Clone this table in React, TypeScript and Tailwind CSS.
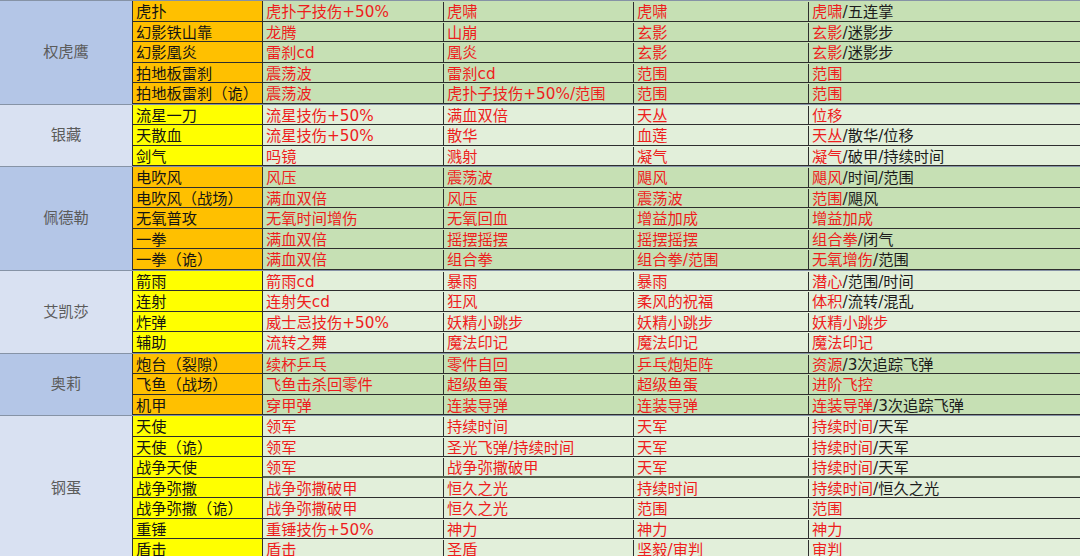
import React from "react";

type Row = [string, string, string, string, string];
type Group = { name: string; dark: boolean; rows: Row[]; thickBefore?: number };

const groups: Group[] = [
  {
    name: "权虎鹰",
    dark: true,
    rows: [
      ["虎扑", "虎扑子技伤+50%", "虎啸", "虎啸", "虎啸|/五连掌"],
      ["幻影铁山靠", "龙腾", "山崩", "玄影", "玄影|/迷影步"],
      ["幻影凰炎", "雷刹cd", "凰炎", "玄影", "玄影|/迷影步"],
      ["拍地板雷刹", "震荡波", "雷刹cd", "范围", "范围"],
      ["拍地板雷刹（诡）", "震荡波", "虎扑子技伤+50%/范围", "范围", "范围"],
    ],
  },
  {
    name: "银藏",
    dark: false,
    rows: [
      ["流星一刀", "流星技伤+50%", "满血双倍", "天丛", "位移"],
      ["天散血", "流星技伤+50%", "散华", "血莲", "天丛|/散华/位移"],
      ["剑气", "吗镜", "溅射", "凝气", "凝气|/破甲/持续时间"],
    ],
  },
  {
    name: "佩德勒",
    dark: true,
    rows: [
      ["电吹风", "风压", "震荡波", "飓风", "飓风|/时间/范围"],
      ["电吹风（战场）", "满血双倍", "风压", "震荡波", "范围|/飓风"],
      ["无氧普攻", "无氧时间增伤", "无氧回血", "增益加成", "增益加成"],
      ["一拳", "满血双倍", "摇摆摇摆", "摇摆摇摆", "组合拳|/闭气"],
      ["一拳（诡）", "满血双倍", "组合拳", "组合拳/范围", "无氧增伤|/范围"],
    ],
  },
  {
    name: "艾凯莎",
    dark: false,
    rows: [
      ["箭雨", "箭雨cd", "暴雨", "暴雨", "潜心|/范围/时间"],
      ["连射", "连射矢cd", "狂风", "柔风的祝福", "体积|/流转/混乱"],
      ["炸弹", "威士忌技伤+50%", "妖精小跳步", "妖精小跳步", "妖精小跳步"],
      ["辅助", "流转之舞", "魔法印记", "魔法印记", "魔法印记"],
    ],
  },
  {
    name: "奥莉",
    dark: true,
    rows: [
      ["炮台（裂隙）", "续杯乒乓", "零件自回", "乒乓炮矩阵", "资源|/3次追踪飞弹"],
      ["飞鱼（战场）", "飞鱼击杀回零件", "超级鱼蛋", "超级鱼蛋", "进阶飞控"],
      ["机甲", "穿甲弹", "连装导弹", "连装导弹", "连装导弹|/3次追踪飞弹"],
    ],
  },
  {
    name: "钢蛋",
    dark: false,
    thickBefore: 3,
    rows: [
      ["天使", "领军", "持续时间", "天军", "持续时间|/天军"],
      ["天使（诡）", "领军", "圣光飞弹/持续时间", "天军", "持续时间|/天军"],
      ["战争天使", "领军", "战争弥撒破甲", "天军", "持续时间|/天军"],
      ["战争弥撒", "战争弥撒破甲", "恒久之光", "持续时间", "持续时间|/恒久之光"],
      ["战争弥撒（诡）", "战争弥撒破甲", "恒久之光", "范围", "范围"],
      ["重锤", "重锤技伤+50%", "神力", "神力", "神力"],
      ["盾击", "盾击", "圣盾", "坚毅/审判", "审判"],
    ],
  },
];

const font = {
  fontFamily: '"DejaVu Sans", "Noto Sans CJK SC", sans-serif',
};

function Mixed({ text }: { text: string }) {
  const [red, black] = text.split("|");
  return (
    <span className="whitespace-nowrap">
      <span className="text-[#ee1d1d]">{red}</span>
      {black !== undefined && <span className="text-[#1c1c1c]">{black}</span>}
    </span>
  );
}

function GroupBlock({ g }: { g: Group }) {
  const labelBg = g.dark ? "bg-[#b4c6e7]" : "bg-[#d9e1f2]";
  const nameBg = g.dark ? "bg-[#ffc000]" : "bg-[#ffff00]";
  const dataBg = g.dark ? "bg-[#c6e0b4]" : "bg-[#e2efda]";
  return (
    <div className="flex border-b border-[#8693a6]">
      <div
        className={`w-[133px] shrink-0 flex items-center justify-center border-r border-[#333] ${labelBg} text-[15.25px] text-[#5b5b5b]`}
      >
        <span className="pt-[1px]">{g.name}</span>
      </div>
      <div className="flex-1 flex flex-col">
        {g.rows.map((r, i) => {
          const thick = g.thickBefore !== undefined && i === g.thickBefore - 1;
          return (
            <div key={i} className="flex h-[20.5px] text-[15.25px] leading-[20px]">
              <div
                className={`w-[130px] shrink-0 pl-[3px] pt-[1px] border-r border-b border-[#2e2e2e] ${nameBg} text-[#141414] whitespace-nowrap overflow-hidden`}
              >
                {r[0]}
              </div>
              <div
                className={`flex-1 flex pt-[1px] ${dataBg} ${
                  thick ? "border-b-2 border-b-[#55604f]" : "border-b border-b-[#2e2e2e]"
                }`}
              >
                <div className="w-[181px] shrink-0 pl-[3px] border-r border-[#2e2e2e] text-[#ee1d1d] whitespace-nowrap overflow-hidden">
                  {r[1]}
                </div>
                <div className="w-[190px] shrink-0 pl-[3px] border-r border-[#2e2e2e] text-[#ee1d1d] whitespace-nowrap overflow-hidden">
                  {r[2]}
                </div>
                <div className="w-[175px] shrink-0 pl-[3px] border-r border-[#2e2e2e] text-[#ee1d1d] whitespace-nowrap overflow-hidden">
                  {r[3]}
                </div>
                <div className="flex-1 pl-[3px] whitespace-nowrap overflow-hidden">
                  <Mixed text={r[4]} />
                </div>
              </div>
            </div>
          );
        })}
      </div>
    </div>
  );
}

export default function App() {
  return (
    <div
      className="w-[1080px] h-[556px] overflow-hidden bg-white border-t border-[#8693a6]"
      style={font}
    >
      {groups.map((g) => (
        <GroupBlock key={g.name} g={g} />
      ))}
    </div>
  );
}
